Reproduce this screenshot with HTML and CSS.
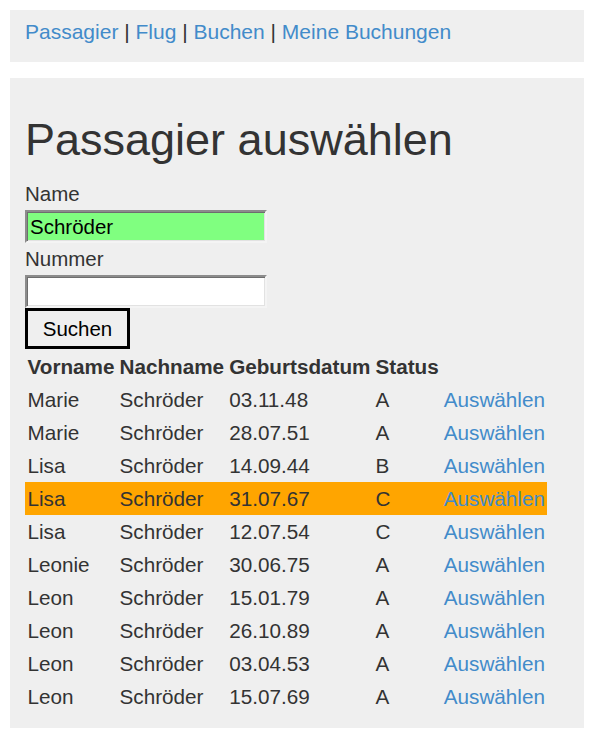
FILE: index.html
```html
<!DOCTYPE html>
<html lang="de">
<head>
<meta charset="utf-8">
<title>Passagier auswählen</title>
<link rel="stylesheet" href="styles.css">
</head>
<body>
<nav class="navbox">
  <a href="#" class="navlink">Passagier</a> | <a href="#" class="navlink">Flug</a> | <a href="#" class="navlink">Buchen</a> | <a href="#" class="navlink">Meine Buchungen</a>
</nav>
<main class="mainbox">
  <h1 class="title">Passagier auswählen</h1>
  <label class="label" for="name">Name</label>
  <input class="field field-valid" id="name" type="text" value="Schröder">
  <label class="label" for="nummer">Nummer</label>
  <input class="field" id="nummer" type="text" value="">
  <button class="btn" type="button">Suchen</button>
  <table class="results">
    <thead>
      <tr><th>Vorname</th><th>Nachname</th><th>Geburtsdatum</th><th>Status</th><th></th></tr>
    </thead>
    <tbody>
      <tr><td>Marie</td><td>Schröder</td><td>03.11.48</td><td>A</td><td><a href="#" class="pick">Auswählen</a></td></tr>
      <tr><td>Marie</td><td>Schröder</td><td>28.07.51</td><td>A</td><td><a href="#" class="pick">Auswählen</a></td></tr>
      <tr><td>Lisa</td><td>Schröder</td><td>14.09.44</td><td>B</td><td><a href="#" class="pick">Auswählen</a></td></tr>
      <tr class="selected"><td>Lisa</td><td>Schröder</td><td>31.07.67</td><td>C</td><td><a href="#" class="pick">Auswählen</a></td></tr>
      <tr><td>Lisa</td><td>Schröder</td><td>12.07.54</td><td>C</td><td><a href="#" class="pick">Auswählen</a></td></tr>
      <tr><td>Leonie</td><td>Schröder</td><td>30.06.75</td><td>A</td><td><a href="#" class="pick">Auswählen</a></td></tr>
      <tr><td>Leon</td><td>Schröder</td><td>15.01.79</td><td>A</td><td><a href="#" class="pick">Auswählen</a></td></tr>
      <tr><td>Leon</td><td>Schröder</td><td>26.10.89</td><td>A</td><td><a href="#" class="pick">Auswählen</a></td></tr>
      <tr><td>Leon</td><td>Schröder</td><td>03.04.53</td><td>A</td><td><a href="#" class="pick">Auswählen</a></td></tr>
      <tr><td>Leon</td><td>Schröder</td><td>15.07.69</td><td>A</td><td><a href="#" class="pick">Auswählen</a></td></tr>
    </tbody>
  </table>
</main>
</body>
</html>
```
FILE: styles.css
```css
html, body {
  margin: 0;
  padding: 0;
  background: #ffffff;
}
body {
  margin: 10px;
  font-family: "Liberation Sans", Arial, sans-serif;
  color: #333333;
  font-size: 20.5px;
  line-height: 30px;
}
.navbox {
  background: #efefef;
  padding: 7px 15px 15px;
  font-size: 21px;
  line-height: 30px;
  color: #333333;
}
.navlink, .pick {
  color: #428bca;
  text-decoration: none;
}
.mainbox {
  margin-top: 16px;
  background: #efefef;
  padding: 15px 15px 15px;
}
.title {
  font-size: 45px;
  font-weight: normal;
  line-height: 50px;
  margin: 22px 0 13px;
  color: #333333;
}
.label {
  display: block;
  line-height: 32px;
  height: 32px;
}
.field {
  display: block;
  box-sizing: border-box;
  width: 242px;
  height: 33px;
  margin: 0;
  padding: 0 3px;
  font-family: "Liberation Sans", Arial, sans-serif;
  font-size: 20.5px;
  color: #000000;
  background: #ffffff;
  border: 2px solid;
  border-color: #8c8c8c #f4f4f4 #f4f4f4 #8c8c8c;
  box-shadow: inset 1px 1px 0 #6e6e6e, inset -1px -1px 0 #e2e2e2;
  outline: none;
}
.field-valid {
  background: #80ff80;
}
.btn {
  display: block;
  box-sizing: border-box;
  height: 41px;
  width: 105px;
  margin: 0;
  padding: 0 14px;
  font-family: "Liberation Sans", Arial, sans-serif;
  font-size: 20.5px;
  color: #000000;
  background: #efefef;
  border: 3px solid #000000;
  border-radius: 0;
}
.results {
  margin-top: 1px;
  border-collapse: collapse;
  border-spacing: 0;
  font-size: 20.7px;
}
.results th,
.results td {
  padding: 1.5px 2.5px;
  text-align: left;
  white-space: nowrap;
  line-height: 30px;
}
.results th {
  font-weight: bold;
}
.selected {
  background: #ffa500;
}
```
